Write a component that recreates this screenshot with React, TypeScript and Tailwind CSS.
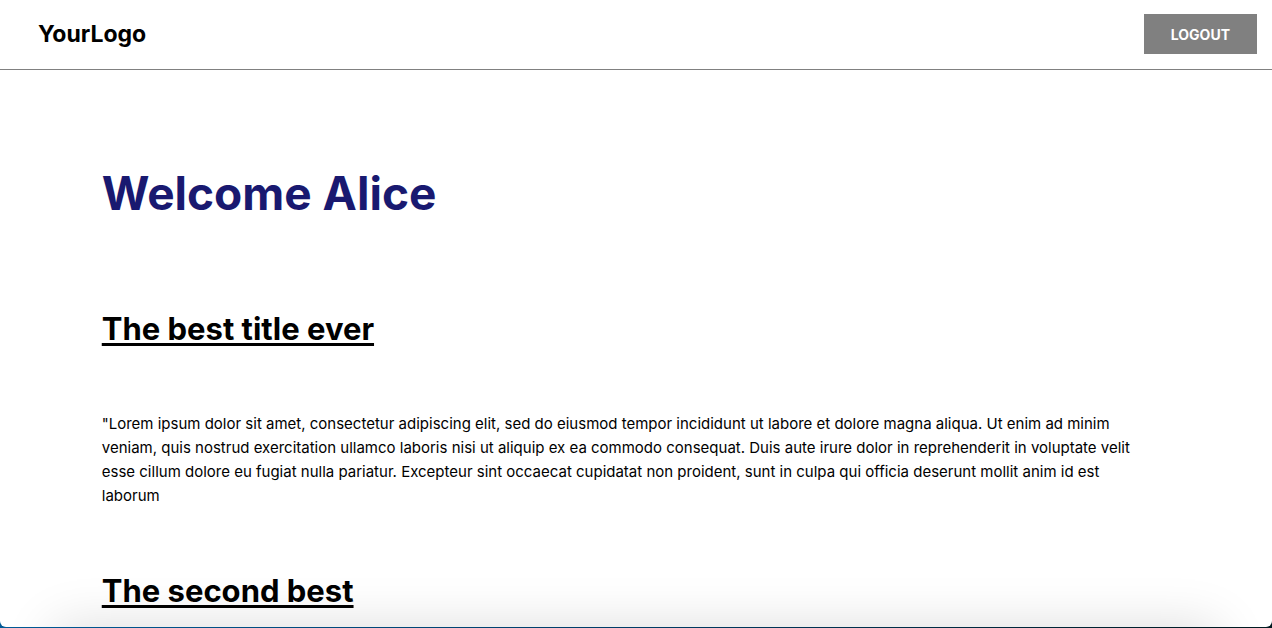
const articles = [
  {
    title: "The best title ever",
    body: '"Lorem ipsum dolor sit amet, consectetur adipiscing elit, sed do eiusmod tempor incididunt ut labore et dolore magna aliqua. Ut enim ad minim veniam, quis nostrud exercitation ullamco laboris nisi ut aliquip ex ea commodo consequat. Duis aute irure dolor in reprehenderit in voluptate velit esse cillum dolore eu fugiat nulla pariatur. Excepteur sint occaecat cupidatat non proident, sunt in culpa qui officia deserunt mollit anim id est laborum',
  },
  { title: "The second best", body: "" },
];

export default function App() {
  return (
    <div className="h-screen overflow-hidden bg-linear-to-r from-[#005a96] via-[#003c66] to-[#001a20] pb-px font-['Inter',sans-serif] text-black">
      <div className="relative h-full overflow-hidden rounded-b-md bg-white">
        <header className="flex items-center justify-between border-b border-[#808080] pt-3.5 pr-[15px] pb-[15px] pl-[38px]">
          <a href="#" className="text-[23px] leading-10 font-bold">YourLogo</a>
          <button type="button" className="h-10 bg-[#808080] px-[27px] pt-0.5 text-sm font-bold text-white">LOGOUT</button>
        </header>
        <main className="pt-[87px] pr-[9%] pl-[8%]">
          <h1 className="pb-[17px] text-[46px] leading-[72px] font-bold text-[#191970]">Welcome Alice</h1>
          {articles.map((a) => (
            <article key={a.title} className="pt-[59px]">
              <h2 className="text-[31px] leading-12 font-bold underline decoration-[3px] underline-offset-3">{a.title}</h2>
              <p className="pt-[59px] text-[15px] leading-6">{a.body}</p>
            </article>
          ))}
        </main>
        <div className="pointer-events-none absolute inset-x-[54px] top-full h-40 shadow-[0_0_50px_rgba(0,0,0,0.14)]" />
      </div>
    </div>
  );
}
